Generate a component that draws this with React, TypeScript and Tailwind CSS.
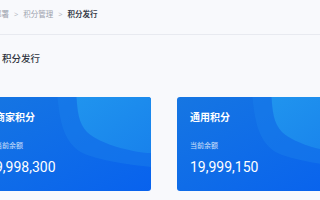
const font = { fontFamily: '"Noto Sans", Roboto, "Noto Sans CJK SC", sans-serif' };

const cards = [
  { id: "merchant", title: "商家积分", label: "当前余额", amount: "9,998,300" },
  { id: "general", title: "通用积分", label: "当前余额", amount: "19,999,150" },
];

const CardBg = ({ id }: { id: string }) => (
  <svg
    className="absolute inset-0 h-full w-full"
    viewBox="0 0 177 94"
    preserveAspectRatio="none"
  >
    <defs>
      <linearGradient id={`base-${id}`} x1="0" y1="0" x2="1" y2="1">
        <stop offset="0" stopColor="#1676e2" />
        <stop offset="1" stopColor="#0862ee" />
      </linearGradient>
      <linearGradient id={`hi-${id}`} x1="0" y1="0" x2="1" y2="1">
        <stop offset="0" stopColor="#2094ee" />
        <stop offset="1" stopColor="#1882ec" />
      </linearGradient>
    </defs>
    <rect width="177" height="94" fill={`url(#base-${id})`} />
    <path
      d="M79 0 C82 30 88 50 110 58 C135 66 160 68 177 70 L177 0 Z"
      fill="#1a80ea"
      opacity="0.45"
    />
    <path
      d="M99 0 C100 14 101 26 110 35 C118 42 128 46 145 51 C158 54 168 56 177 56 L177 0 Z"
      fill={`url(#hi-${id})`}
    />
  </svg>
);

export default function App() {
  return (
    <div className="w-[320px] h-[200px] overflow-hidden bg-[#f8f9fc]" style={font}>
      <div className="h-[35px] border-b border-[#e8eaf0] pt-[9px]">
        <div className="flex items-center gap-[5px] ml-[-6px] text-[7.5px] leading-[10px] text-[#9ba1ad]">
          <span>部署</span>
          <span className="text-[#b8bcc6]">&gt;</span>
          <span>积分管理</span>
          <span className="text-[#b8bcc6]">&gt;</span>
          <span className="font-bold text-[#3a3f4b]">积分发行</span>
        </div>
      </div>
      <div className="pl-[2px] pt-[18px] text-[9.5px] leading-[12px] text-[#303540] font-medium">
        积分发行
      </div>
      <div className="ml-[-18px] mt-[32px] flex gap-[26px]">
        {cards.map((c) => (
          <div
            key={c.id}
            className="relative w-[169px] h-[94px] shrink-0 overflow-hidden rounded-[3px] text-white"
          >
            <CardBg id={c.id} />
            <div className="relative flex flex-col pl-[13px] pt-[14px]">
              <span className="text-[10px] leading-[12px] font-bold">{c.title}</span>
              <span className="mt-[18px] text-[7px] leading-[10px] text-white/80">{c.label}</span>
              <span className="mt-[8px] text-[14px] leading-[16px]" style={{ fontFamily: "Roboto, sans-serif" }}>
                {c.amount}
              </span>
            </div>
          </div>
        ))}
      </div>
    </div>
  );
}
